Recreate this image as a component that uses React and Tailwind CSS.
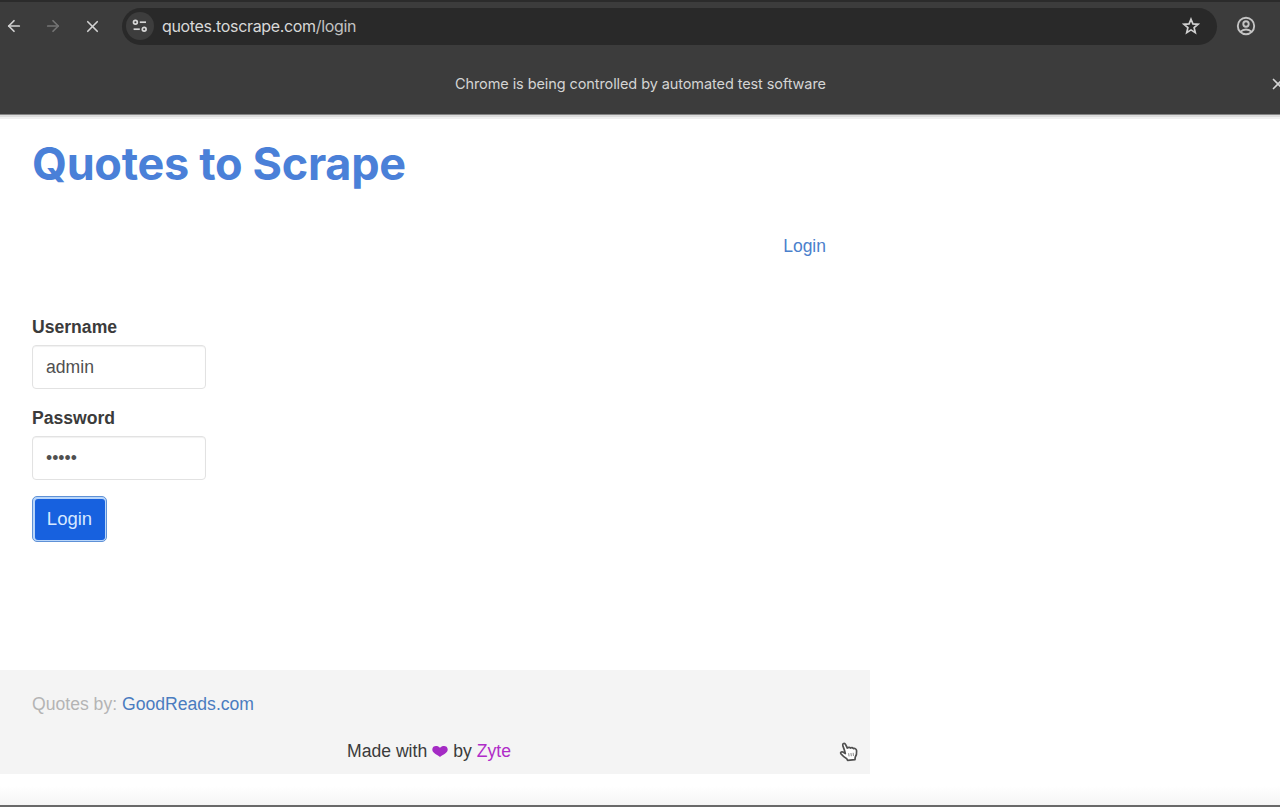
import React, { useState } from "react";
import { ArrowLeft, ArrowRight, X } from "lucide-react";

function SiteSettingsIcon() {
  return (
    <svg width="16" height="14" viewBox="0 0 16 14" fill="none" stroke="#d6d6d6" strokeWidth="1.7">
      <circle cx="3.4" cy="3.2" r="1.9" />
      <path d="M7.8 3.2H14" />
      <path d="M1.6 10.2H7.8" />
      <circle cx="12.2" cy="10.2" r="1.9" />
    </svg>
  );
}

function StarIcon() {
  return (
    <svg width="18" height="18" viewBox="0 0 18 18" fill="none" stroke="#d0d0d0" strokeWidth="1.7">
      <path d="M9 2.2L10.9 6.9L16 7.3L12.1 10.6L13.3 15.6L9 12.9L4.7 15.6L5.9 10.6L2 7.3L7.1 6.9Z" />
    </svg>
  );
}

function ProfileIcon() {
  return (
    <svg width="20" height="20" viewBox="0 0 20 20" fill="none" stroke="#c4c4c4" strokeWidth="1.9">
      <circle cx="10" cy="10" r="8.2" />
      <circle cx="10" cy="8" r="2.7" />
      <path d="M4.4 15.8C7.4 12.7 12.6 12.7 15.6 15.8" />
    </svg>
  );
}

function HandCursor() {
  return (
    <svg
      className="absolute left-[839px] top-[742px]"
      width="19"
      height="20"
      viewBox="0 0 19 20"
      fill="#fff"
      stroke="#505050"
      strokeWidth="1.7"
      strokeLinejoin="round"
      strokeLinecap="round"
    >
      <path d="M5.6 8.6L3.8 3.6C3.2 1.4 5.7.7 6.6 2.6L8.3 6C9.5 5.2 10.8 5.2 11.4 6.1C12.6 5.4 13.8 5.7 14.4 6.6C16 6.1 17.4 7 17.6 8.8C17.9 12 17.3 13.6 16.2 15.2L16 17.6L8.6 18.3L7.8 16.8C5.6 15.6 3.7 14 1.9 11.8C1 10.3 2.5 9.3 3.9 10.1L6.3 11.5Z" />
      <path d="M9.7 11.6L10 14M12 11.4L12.3 13.8M14.2 11.2L14.4 13.6" stroke="#8a8a8a" strokeWidth="1" />
    </svg>
  );
}

function Toolbar() {
  return (
    <div className="flex h-[50px] items-center border-t-2 border-[#2b2b2b] pl-[5px]">
      <ArrowLeft size={18} strokeWidth={2.3} color="#d2d2d2" />
      <ArrowRight className="ml-[21px]" size={18} strokeWidth={2.3} color="#747474" />
      <X className="ml-[21px]" size={19} strokeWidth={2.1} color="#d2d2d2" />
      <div className="ml-[20px] flex h-[37px] w-[1095px] items-center rounded-full bg-[#292929] pl-1">
        <span className="flex h-[28px] w-[28px] items-center justify-center rounded-full bg-[#3d3d3d]">
          <SiteSettingsIcon />
        </span>
        <span className="ml-[8px] font-['Inter',sans-serif] text-[16px] tracking-[-0.33px] text-[#d8d8d8]">
          quotes.toscrape.com<span className="text-[#c2c2c2]">/login</span>
        </span>
        <span className="ml-auto mr-[17px]">
          <StarIcon />
        </span>
      </div>
      <span className="ml-[19px]">
        <ProfileIcon />
      </span>
    </div>
  );
}

function InfoBar() {
  return (
    <div className="flex h-[65px] items-center overflow-hidden pt-[2px]">
      <span className="ml-[455px] whitespace-nowrap font-['Inter',sans-serif] text-[14.5px] tracking-[-0.09px] text-[#d4d4d4]">
        Chrome is being controlled by automated test software
      </span>
      <X className="-mr-[7px] ml-auto shrink-0" size={18} strokeWidth={2.2} color="#d4d4d4" />
    </div>
  );
}

function Field({ label, type, value, onChange }) {
  return (
    <label className="block">
      <span className="block h-[36px] text-[17.6px] font-bold leading-[36px]">{label}</span>
      <input
        type={type}
        value={value}
        onChange={(e) => onChange(e.target.value)}
        className="block h-[44px] w-[174px] rounded-[4px] border border-[#e2e2e2] bg-white px-[13px] pt-px text-[17.6px] text-[#505050] shadow-[inset_0_1px_1px_rgba(0,0,0,0.06)] outline-none"
      />
    </label>
  );
}

export default function App() {
  const [username, setUsername] = useState("admin");
  const [password, setPassword] = useState("admin");

  return (
    <div className="relative flex h-[807px] w-[1280px] flex-col overflow-hidden bg-white font-['Liberation_Sans',Arial,sans-serif] text-[#3b3b3b]">
      <header className="h-[114px] shrink-0 bg-[#3c3c3c]">
        <Toolbar />
        <InfoBar />
      </header>
      <div className="h-[5px] shrink-0 border-b-2 border-t border-b-[#f0f0f0] border-t-[#858585] bg-[#dcdcdc]" />

      <main className="h-[551px] w-[870px] shrink-0 pl-8">
        <h1 className="h-[90px] whitespace-nowrap font-['Inter',sans-serif] text-[45px] font-bold leading-[90px] tracking-[-0.3px] text-[#4a80d8]">
          Quotes to Scrape
        </h1>
        <div className="flex h-[73px] items-center justify-end pr-[44px] pt-px">
          <a className="text-[17.5px] text-[#4a80cc]">Login</a>
        </div>
        <form className="mt-[27px]" onSubmit={(e) => e.preventDefault()}>
          <Field label="Username" type="text" value={username} onChange={setUsername} />
          <div className="h-[11px]" />
          <Field label="Password" type="password" value={password} onChange={setPassword} />
          <button className="mt-[16px] flex h-[46px] w-[75px] items-center justify-center rounded-[5px] border border-[#5f91d6] bg-[#b9d6fa] p-[1.5px]">
            <span className="flex h-full w-full items-center justify-center rounded-[3px] bg-[#1761df] text-[18.5px] text-[#d6e8ff]">
              Login
            </span>
          </button>
        </form>
      </main>

      <footer className="h-[104px] w-[870px] shrink-0 bg-[#f4f4f4] pt-[22px]">
        <p className="h-[24px] pl-8 text-[17.6px] leading-[24px] text-[#b4b4b4]">
          Quotes by: <a className="text-[#4a7cc0]">GoodReads.com</a>
        </p>
        <p className="mt-[23px] flex h-[24px] items-center pl-[347px] text-[17.6px] text-[#3b3b3b]">
          Made with
          <svg className="ml-[5px] mr-[5px]" width="16" height="13" viewBox="0 0 16 13" fill="#a42bc4">
            <path d="M8 12C6 9.8.3 8.6.3 4.5C.3.3 6 .2 8 3C10 .2 15.7.3 15.7 4.5C15.7 8.6 10 9.8 8 12Z" />
          </svg>
          by <a className="ml-[5px] text-[#b02cc8]">Zyte</a>
        </p>
      </footer>
      <div className="flex-1 bg-linear-to-b from-white from-40% to-[#f5f5f5]" />
      <div className="h-[2px] shrink-0 bg-[#696969]" />
      <HandCursor />
    </div>
  );
}
